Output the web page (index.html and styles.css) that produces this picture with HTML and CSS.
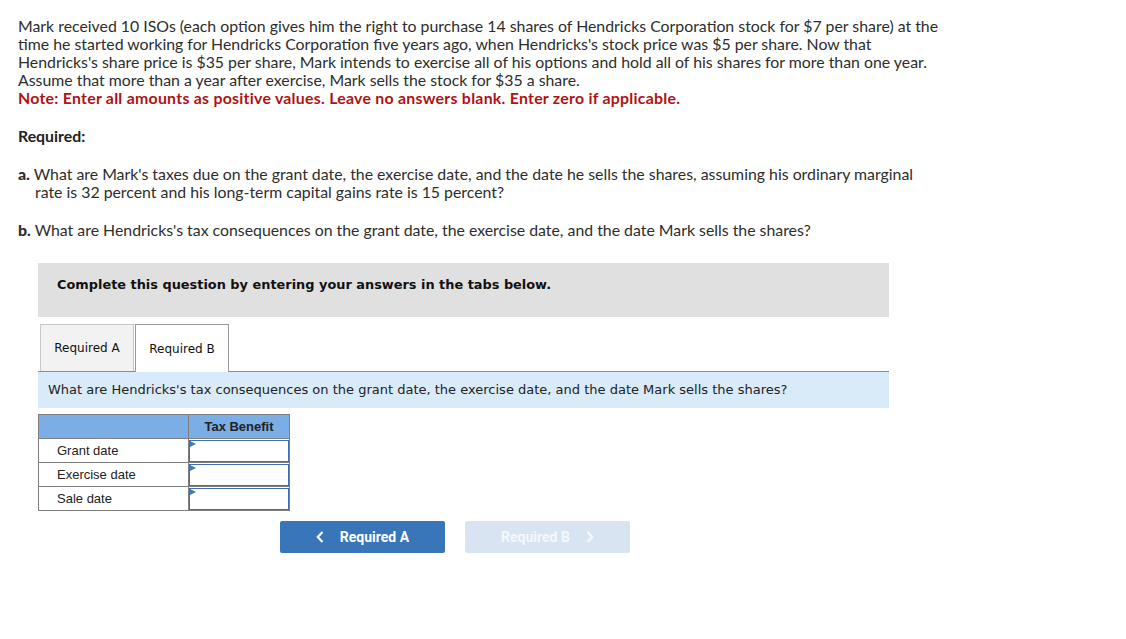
FILE: index.html
```html
<!DOCTYPE html>
<html>
<head>
<meta charset="utf-8">
<link rel="stylesheet" href="styles.css">
</head>
<body>
<div class="page">
  <p class="intro">Mark received 10 ISOs (each option gives him the right to purchase 14 shares of Hendricks Corporation stock for $7 per share) at the time he started working for Hendricks Corporation five years ago, when Hendricks's stock price was $5 per share. Now that Hendricks's share price is $35 per share, Mark intends to exercise all of his options and hold all of his shares for more than one year. Assume that more than a year after exercise, Mark sells the stock for $35 a share.<br><span class="note">Note: Enter all amounts as positive values. Leave no answers blank. Enter zero if applicable.</span></p>
  <p class="required">Required:</p>
  <p class="item"><b>a.</b> What are Mark's taxes due on the grant date, the exercise date, and the date he sells the shares, assuming his ordinary marginal rate is 32 percent and his long-term capital gains rate is 15 percent?</p>
  <p class="item item-b"><b>b.</b> What are Hendricks's tax consequences on the grant date, the exercise date, and the date Mark sells the shares?</p>

  <div class="widget">
    <div class="banner">Complete this question by entering your answers in the tabs below.</div>
    <div class="tabs">
      <div class="tab">Required A</div>
      <div class="tab active">Required B</div>
    </div>
    <div class="prompt">What are Hendricks's tax consequences on the grant date, the exercise date, and the date Mark sells the shares?</div>
    <table class="grid">
      <tr class="head"><th class="lbl"></th><th class="val">Tax Benefit</th></tr>
      <tr><td class="lbl">Grant date</td><td class="val"><div class="inp"></div></td></tr>
      <tr><td class="lbl">Exercise date</td><td class="val"><div class="inp"></div></td></tr>
      <tr><td class="lbl">Sale date</td><td class="val"><div class="inp"></div></td></tr>
    </table>
    <div class="nav">
      <div class="btn prev"><svg class="chev left" width="8" height="12" viewBox="0 0 8 12"><path d="M6.5 1 L1.8 6 L6.5 11" fill="none" stroke="currentColor" stroke-width="2.2"/></svg>Required A</div>
      <div class="btn next">Required B<svg class="chev right" width="8" height="12" viewBox="0 0 8 12"><path d="M1.5 1 L6.2 6 L1.5 11" fill="none" stroke="currentColor" stroke-width="2.2"/></svg></div>
    </div>
  </div>
</div>
</body>
</html>
```
FILE: styles.css
```css
html, body { margin: 0; padding: 0; background: #fff; }
.page {
  padding: 17px 0 0 18px;
  width: 935px;
  font-family: "Lato", "Liberation Sans", sans-serif;
  font-size: 15.85px;
  color: #2d2d2d;
}
p { margin: 0; line-height: 18px; }
.note { color: #b01212; font-weight: bold; letter-spacing: 0.27px; }
.required { margin-top: 20px; font-weight: bold; color: #222; }
.item { margin-top: 20px; padding-left: 17px; text-indent: -17px; width: 905px; }
.item b { font-weight: 900; }
.item-b { margin-top: 20px; }
.widget { margin: 24px 0 0 20px; width: 851px; }
.banner {
  background: #e0e0e0;
  height: 54px;
  box-sizing: border-box;
  padding: 15px 0 0 19px;
  font-family: "DejaVu Sans", Verdana, sans-serif;
  font-weight: bold;
  font-size: 12.9px;
  line-height: 14px;
  color: #111;
}
.tabs {
  display: flex;
  margin-top: 7px;
  padding-left: 2px;
  border-bottom: 1px solid #8c8c8c;
  height: 47px;
}
.tab {
  width: 94px;
  box-sizing: border-box;
  border: 1px solid #c8c8c8;
  border-bottom: none;
  background: #f2f2f2;
  font-family: "DejaVu Sans", Verdana, sans-serif;
  font-size: 12px;
  color: #111;
  display: flex; align-items: center; justify-content: center;
  height: 47px;
}
.tab.active {
  background: #fff;
  border-color: #999;
  margin-left: 1px;
  height: 48px;
  margin-bottom: -1px;
}
.prompt {
  background: #d9ebf9;
  height: 36px;
  box-sizing: border-box;
  padding: 10px 0 0 10px;
  font-family: "DejaVu Sans", Verdana, sans-serif;
  font-size: 13px;
  line-height: 15px;
  color: #222;
}
.grid {
  margin-top: 6px;
  border-collapse: collapse;
  font-family: "Liberation Sans", Arial, sans-serif;
  font-size: 13px;
  color: #222;
}
.grid td, .grid th { border: 1px solid #808080; padding: 0; height: 23px; }
.grid .lbl { width: 150px; padding-left: 18px; box-sizing: border-box; text-align: left; }
.grid .val { width: 100px; }
.grid th { background: #7aaee4; font-weight: bold; color: #222; font-size: 13px; }
.grid th.val { text-align: center; }
.inp {
  position: relative;
  height: 22px;
  box-sizing: border-box;
  border: 1px solid #3f6fb1;
  margin: 0;
  background: #fff;
}
.inp::before {
  content: "";
  position: absolute;
  left: 0; top: 0;
  border-left: 6px solid #3f79c4;
  border-top: 3px solid transparent;
  border-bottom: 3px solid transparent;
}
.nav { display: flex; gap: 20px; margin: 10px 0 0 242px; }
.btn {
  width: 165px;
  height: 32px;
  border-radius: 2px;
  display: flex; align-items: center; justify-content: center;
  font-family: "Roboto", "Liberation Sans", sans-serif;
  font-weight: bold;
  font-size: 14px;
  color: #fff;
}
.btn.prev { background: #3875b9; }
.btn.next { background: #d8e4f2; color: #f4f8fc; }
.chev { display: block; }
.chev.left { margin-right: 16px; }
.chev.right { margin-left: 16px; }
```
